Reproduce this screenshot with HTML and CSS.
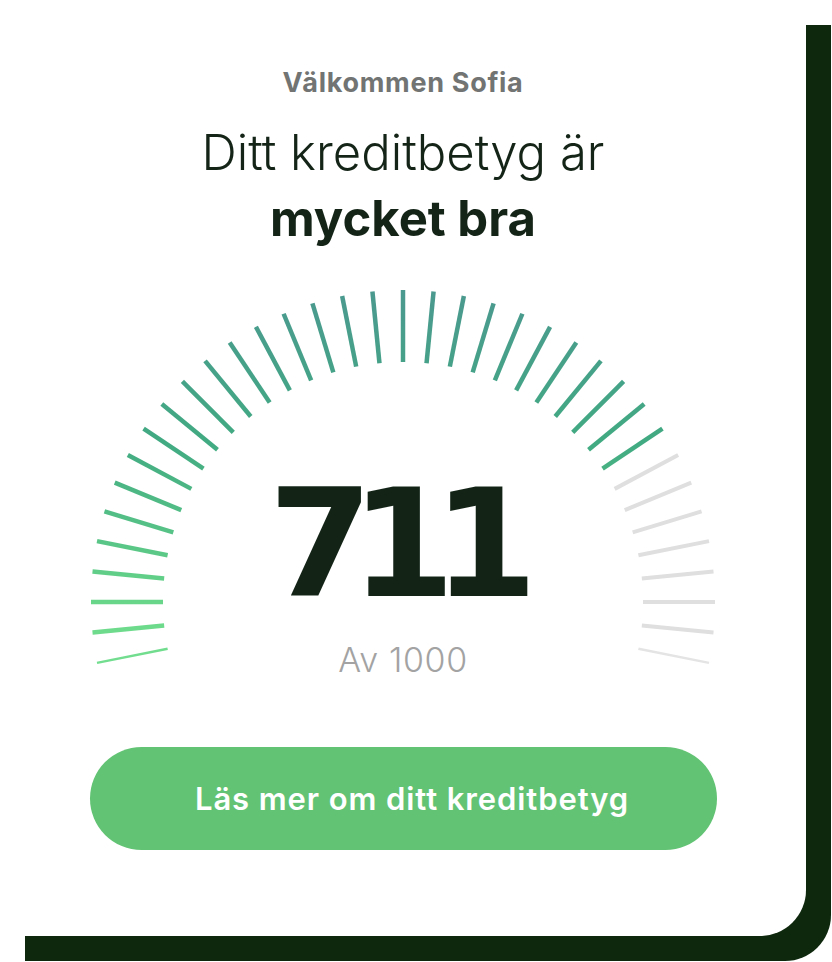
FILE: index.html
```html
<!DOCTYPE html>
<html lang="sv">
<head>
<meta charset="utf-8">
<title>Kreditbetyg</title>
<link rel="stylesheet" href="styles.css">
</head>
<body>
<main class="card">
  <p class="welcome">Välkommen Sofia</p>
  <h1 class="title">Ditt kreditbetyg är<br><strong>mycket bra</strong></h1>
  <div class="gauge">
    <svg class="gauge-svg" width="640" height="400" viewBox="0 0 640 400" aria-hidden="true">
      <defs>
        <linearGradient id="tickGrad" gradientUnits="userSpaceOnUse" x1="0" y1="9" x2="0" y2="390">
          <stop offset="0" stop-color="#4b998f"/>
          <stop offset="0.4" stop-color="#41aa82"/>
          <stop offset="0.85" stop-color="#6bd98a"/>
          <stop offset="1" stop-color="#74de90"/>
        </linearGradient>
        <mask id="tickMask" maskUnits="userSpaceOnUse" x="0" y="0" width="640" height="400">
          <g stroke="#fff" stroke-width="4.5">
            <line x1="320" y1="9" x2="320" y2="81" transform="rotate(-101.25 320 321)" stroke-width="2.5"/>
            <line x1="320" y1="9" x2="320" y2="81" transform="rotate(-95.625 320 321)"/>
            <line x1="320" y1="9" x2="320" y2="81" transform="rotate(-90 320 321)"/>
            <line x1="320" y1="9" x2="320" y2="81" transform="rotate(-84.375 320 321)"/>
            <line x1="320" y1="9" x2="320" y2="81" transform="rotate(-78.75 320 321)"/>
            <line x1="320" y1="9" x2="320" y2="81" transform="rotate(-73.125 320 321)"/>
            <line x1="320" y1="9" x2="320" y2="81" transform="rotate(-67.5 320 321)"/>
            <line x1="320" y1="9" x2="320" y2="81" transform="rotate(-61.875 320 321)"/>
            <line x1="320" y1="9" x2="320" y2="81" transform="rotate(-56.25 320 321)"/>
            <line x1="320" y1="9" x2="320" y2="81" transform="rotate(-50.625 320 321)"/>
            <line x1="320" y1="9" x2="320" y2="81" transform="rotate(-45 320 321)"/>
            <line x1="320" y1="9" x2="320" y2="81" transform="rotate(-39.375 320 321)"/>
            <line x1="320" y1="9" x2="320" y2="81" transform="rotate(-33.75 320 321)"/>
            <line x1="320" y1="9" x2="320" y2="81" transform="rotate(-28.125 320 321)"/>
            <line x1="320" y1="9" x2="320" y2="81" transform="rotate(-22.5 320 321)"/>
            <line x1="320" y1="9" x2="320" y2="81" transform="rotate(-16.875 320 321)"/>
            <line x1="320" y1="9" x2="320" y2="81" transform="rotate(-11.25 320 321)"/>
            <line x1="320" y1="9" x2="320" y2="81" transform="rotate(-5.625 320 321)"/>
            <line x1="320" y1="9" x2="320" y2="81"/>
            <line x1="320" y1="9" x2="320" y2="81" transform="rotate(5.625 320 321)"/>
            <line x1="320" y1="9" x2="320" y2="81" transform="rotate(11.25 320 321)"/>
            <line x1="320" y1="9" x2="320" y2="81" transform="rotate(16.875 320 321)"/>
            <line x1="320" y1="9" x2="320" y2="81" transform="rotate(22.5 320 321)"/>
            <line x1="320" y1="9" x2="320" y2="81" transform="rotate(28.125 320 321)"/>
            <line x1="320" y1="9" x2="320" y2="81" transform="rotate(33.75 320 321)"/>
            <line x1="320" y1="9" x2="320" y2="81" transform="rotate(39.375 320 321)"/>
            <line x1="320" y1="9" x2="320" y2="81" transform="rotate(45 320 321)"/>
            <line x1="320" y1="9" x2="320" y2="81" transform="rotate(50.625 320 321)"/>
            <line x1="320" y1="9" x2="320" y2="81" transform="rotate(56.25 320 321)"/>
          </g>
        </mask>
      </defs>
      <rect x="0" y="0" width="640" height="400" fill="url(#tickGrad)" mask="url(#tickMask)"/>
      <g stroke="#dfdfdf" stroke-width="4">
        <line x1="320" y1="9" x2="320" y2="81" transform="rotate(61.875 320 321)"/>
        <line x1="320" y1="9" x2="320" y2="81" transform="rotate(67.5 320 321)"/>
        <line x1="320" y1="9" x2="320" y2="81" transform="rotate(73.125 320 321)"/>
        <line x1="320" y1="9" x2="320" y2="81" transform="rotate(78.75 320 321)"/>
        <line x1="320" y1="9" x2="320" y2="81" transform="rotate(84.375 320 321)"/>
        <line x1="320" y1="9" x2="320" y2="81" transform="rotate(90 320 321)"/>
        <line x1="320" y1="9" x2="320" y2="81" transform="rotate(95.625 320 321)"/>
        <line x1="320" y1="9" x2="320" y2="81" transform="rotate(101.25 320 321)" stroke-width="2.5" stroke="#e4e4e4"/>
      </g>
    </svg>
    <div class="score">
      <span class="score-value">711</span>
      <span class="score-max">Av 1000</span>
    </div>
  </div>
  <button class="cta" type="button">Läs mer om ditt kreditbetyg</button>
</main>
</body>
</html>
```

FILE: styles.css
```css
* {
  box-sizing: border-box;
}

html, body {
  margin: 0;
  padding: 0;
  background: #ffffff;
}

body {
  font-family: Inter, "Noto Sans", "Liberation Sans", sans-serif;
  width: 832px;
  height: 962px;
  overflow: hidden;
}

.card {
  width: 806px;
  height: 936px;
  background: #ffffff;
  border-radius: 0 0 46px 0;
  box-shadow: 25px 25px 0 0 #0e280d;
  display: flex;
  flex-direction: column;
  align-items: center;
  padding-top: 66px;
}

.welcome {
  margin: 0;
  font-size: 27px;
  line-height: 34px;
  font-weight: 700;
  letter-spacing: 0.7px;
  color: #717472;
}

.title {
  margin: 20px 0 0;
  text-align: center;
  font-size: 49px;
  line-height: 66px;
  font-weight: 300;
  color: #142417;
}

.title strong {
  font-weight: 700;
}

.gauge {
  margin-top: 29px;
  display: grid;
  width: 640px;
  height: 400px;
}

.gauge-svg {
  grid-area: 1 / 1;
  display: block;
}

.score {
  grid-area: 1 / 1;
  display: flex;
  flex-direction: column;
  align-items: center;
  padding-top: 188px;
}

.score-value {
  font-family: "DejaVu Sans", sans-serif;
  font-weight: 700;
  font-size: 150px;
  line-height: 150px;
  letter-spacing: -22px;
  margin-left: -22px;
  color: #132417;
}

.score-max {
  margin-top: 22px;
  font-size: 34px;
  line-height: 38px;
  font-weight: 300;
  letter-spacing: 0.6px;
  color: #a3a3a3;
}

.cta {
  margin-top: 66px;
  width: 627px;
  height: 103px;
  padding: 0 0 0 18px;
  border: 0;
  border-radius: 52px;
  background: #63c374;
  color: #ffffff;
  font-family: Inter, "Noto Sans", sans-serif;
  font-size: 31px;
  font-weight: 600;
  letter-spacing: 0.9px;
  cursor: pointer;
}
```
